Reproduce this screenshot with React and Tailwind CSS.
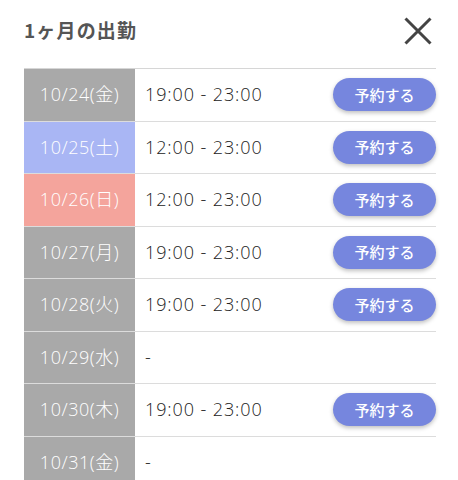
const rows = [
  { date: '10/24(金)', time: '19:00 - 23:00', bg: 'bg-[#a9a9a9]', btn: true },
  { date: '10/25(土)', time: '12:00 - 23:00', bg: 'bg-[#a9b6f4]', btn: true },
  { date: '10/26(日)', time: '12:00 - 23:00', bg: 'bg-[#f4a49c]', btn: true },
  { date: '10/27(月)', time: '19:00 - 23:00', bg: 'bg-[#a9a9a9]', btn: true },
  { date: '10/28(火)', time: '19:00 - 23:00', bg: 'bg-[#a9a9a9]', btn: true },
  { date: '10/29(水)', time: '-', bg: 'bg-[#a9a9a9]', btn: false },
  { date: '10/30(木)', time: '19:00 - 23:00', bg: 'bg-[#a9a9a9]', btn: true },
  { date: '10/31(金)', time: '-', bg: 'bg-[#a9a9a9]', btn: false },
];

export default function App() {
  return (
    <div className="w-[458px] h-[480px] overflow-hidden bg-white font-['Noto_Sans_CJK_JP','Noto_Sans',sans-serif]">
      {/* Header */}
      <div className="flex items-center justify-between pl-6 pr-[25px] h-[57px] pt-1">
        <h2 className="text-[19px] font-bold text-[#555] tracking-[0.06em]">1ヶ月の出勤</h2>
        <svg width="30" height="30" viewBox="0 0 30 30" className="text-[#444]">
          <path d="M2.5 2.5 L27.5 27.5 M27.5 2.5 L2.5 27.5" stroke="currentColor" strokeWidth="3" />
        </svg>
      </div>

      {/* Schedule table */}
      <div className="ml-6 mr-[22px] mt-[11px] border-t border-[#d6d6d6]">
        {rows.map((r) => (
          <div key={r.date} className="flex h-[52.5px] border-b border-[#dcdcdc]">
            <div className={`w-[111px] flex items-center justify-center text-white text-[18px] font-light tracking-[0.03em] font-['Open_Sans','Noto_Sans_CJK_JP',sans-serif] ${r.bg}`}>
              {r.date}
            </div>
            <div className="flex-1 flex items-center justify-between pl-[10px]">
              <span className="text-[18px] text-[#222] font-light tracking-[0.05em] font-['Open_Sans','Noto_Sans_CJK_JP',sans-serif]">{r.time}</span>
              {r.btn && (
                <button className="w-[103px] h-[33px] rounded-full bg-[#7686de] text-white text-[15px] font-medium shadow-[0_2px_4px_rgba(0,0,0,0.25)]">
                  予約する
                </button>
              )}
            </div>
          </div>
        ))}
      </div>
    </div>
  );
}
